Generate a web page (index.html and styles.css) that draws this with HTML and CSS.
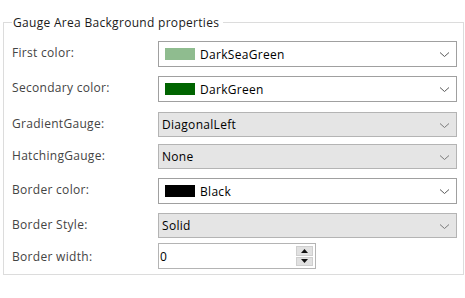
FILE: index.html
```html
<!DOCTYPE html>
<html lang="en">
<head>
    <meta charset="UTF-8">
    <title>Gauge Area Background properties</title>
    <link rel="stylesheet" href="styles.css">
</head>
<body>
    <fieldset class="group">
        <legend>Gauge Area Background properties</legend>

        <div class="row row-1">
            <label>First color:</label>
            <div class="combo combo-white">
                <span class="swatch sea"></span>
                <span class="value">DarkSeaGreen</span>
                <svg class="chev" width="11" height="7" viewBox="0 0 11 7"><path d="M1 1.5 L5.5 5.5 L10 1.5" fill="none" stroke="#5a5a5a" stroke-width="1"/></svg>
            </div>
        </div>

        <div class="row row-2">
            <label>Secondary color:</label>
            <div class="combo combo-white">
                <span class="swatch dark"></span>
                <span class="value">DarkGreen</span>
                <svg class="chev" width="11" height="7" viewBox="0 0 11 7"><path d="M1 1.5 L5.5 5.5 L10 1.5" fill="none" stroke="#5a5a5a" stroke-width="1"/></svg>
            </div>
        </div>

        <div class="row row-3">
            <label>GradientGauge:</label>
            <div class="combo combo-gray">
                <span class="value">DiagonalLeft</span>
                <svg class="chev" width="11" height="7" viewBox="0 0 11 7"><path d="M1 1.5 L5.5 5.5 L10 1.5" fill="none" stroke="#7a7a7a" stroke-width="1"/></svg>
            </div>
        </div>

        <div class="row row-4">
            <label>HatchingGauge:</label>
            <div class="combo combo-gray">
                <span class="value">None</span>
                <svg class="chev" width="11" height="7" viewBox="0 0 11 7"><path d="M1 1.5 L5.5 5.5 L10 1.5" fill="none" stroke="#7a7a7a" stroke-width="1"/></svg>
            </div>
        </div>

        <div class="row row-5">
            <label>Border color:</label>
            <div class="combo combo-white">
                <span class="swatch black"></span>
                <span class="value">Black</span>
                <svg class="chev" width="11" height="7" viewBox="0 0 11 7"><path d="M1 1.5 L5.5 5.5 L10 1.5" fill="none" stroke="#5a5a5a" stroke-width="1"/></svg>
            </div>
        </div>

        <div class="row row-6">
            <label>Border Style:</label>
            <div class="combo combo-gray">
                <span class="value">Solid</span>
                <svg class="chev" width="11" height="7" viewBox="0 0 11 7"><path d="M1 1.5 L5.5 5.5 L10 1.5" fill="none" stroke="#7a7a7a" stroke-width="1"/></svg>
            </div>
        </div>

        <div class="row row-7">
            <label>Border width:</label>
            <div class="spin">
                <span class="value">0</span>
                <div class="spin-buttons">
                    <span class="spin-btn"><svg width="7" height="4" viewBox="0 0 7 4"><path d="M0 4 L3.5 0 L7 4 Z" fill="#111"/></svg></span>
                    <span class="spin-btn"><svg width="7" height="4" viewBox="0 0 7 4"><path d="M0 0 L3.5 4 L7 0 Z" fill="#111"/></svg></span>
                </div>
            </div>
        </div>
    </fieldset>
</body>
</html>
```

FILE: styles.css
```css
* {
    box-sizing: border-box;
    margin: 0;
    padding: 0;
}

body {
    width: 465px;
    height: 298px;
    background: #ffffff;
    font-family: 'Open Sans', 'Liberation Sans', sans-serif;
    font-size: 12px;
    letter-spacing: 0.3px;
    color: #1a1a1a;
    padding: 15px 1px 0 3px;
}

/* group box */
.group {
    width: 461px;
    height: 260px;
    border: 1px solid #dcdcdc;
    padding: 0 6px 0 8px;
}

.group legend {
    padding: 0 4px 0 1px;
    color: #1a1a1a;
    line-height: 15px;
}

.row {
    display: flex;
    align-items: flex-start;
}

.row label {
    width: 146px;
    color: #444;
    line-height: 15px;
    padding-top: 4px;
}

.row-1 { margin-top: 11px; height: 35px; }
.row-2 { height: 36px; }
.row-3 { height: 32px; }
.row-4 { height: 34px; }
.row-5 { height: 35px; }
.row-6 { height: 30px; }
.row-7 { height: 30px; }

.row-7 label {
    padding-top: 6px;
}

/* combo boxes */
.combo {
    width: 299px;
    height: 26px;
    display: flex;
    align-items: center;
    padding: 0 6px 0 3px;
}

.combo-white {
    background: #ffffff;
    border: 1px solid #a0a0a0;
    padding-left: 6px;
}

.combo-gray {
    height: 25px;
    background: #e5e5e5;
    border: 1px solid #b4b4b4;
}

.combo .value {
    flex: 1;
    color: #000;
}

.swatch {
    width: 30px;
    height: 12px;
    margin-right: 5px;
}

.swatch.sea { background: #8fbc8f; }
.swatch.dark { background: #006400; }
.swatch.black { background: #000000; }

.chev {
    margin-top: 1px;
}

/* numeric spin box */
.spin {
    width: 158px;
    height: 26px;
    border: 1px solid #b4b4b4;
    display: flex;
    align-items: center;
    padding: 0 2px 0 1px;
}

.spin .value {
    flex: 1;
    color: #000;
}

.spin-buttons {
    width: 17px;
    height: 20px;
    display: flex;
    flex-direction: column;
    gap: 1px;
}

.spin-btn {
    flex: 1;
    background: #e1e1e1;
    border: 1px solid #cfcfcf;
    display: flex;
    align-items: center;
    justify-content: center;
}
```
